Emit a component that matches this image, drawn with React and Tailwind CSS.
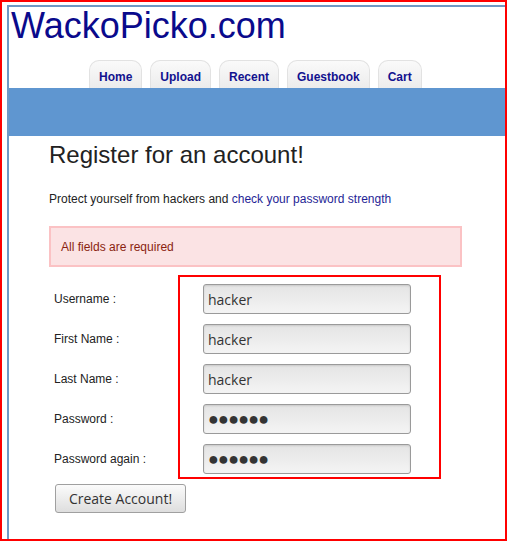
import React from 'react';

const tabs = ['Home', 'Upload', 'Recent', 'Guestbook', 'Cart'];

const fields = [
    { label: 'Username :', value: 'hacker' },
    { label: 'First Name :', value: 'hacker' },
    { label: 'Last Name :', value: 'hacker' },
    { label: 'Password :', value: '●●●●●●', secret: true },
    { label: 'Password again :', value: '●●●●●●', secret: true },
];

const Field = ({ label, value, secret }) => (
    <div className="flex items-center h-[30px]">
        <label className="w-[149px] text-[12px] leading-[14px] text-[#222]">{label}</label>
        <input
            readOnly
            value={value}
            className={`w-[208px] h-[30px] rounded-[3px] border border-[#9a9a9a] bg-gradient-to-b from-[#e4e4e4] to-[#f4f4f4] shadow-[inset_0_1px_2px_rgba(0,0,0,0.12)] px-[4px] text-[#333] outline-none ${secret ? "font-['Liberation_Sans',Arial,sans-serif] text-[18px] tracking-[-0.8px] text-[#2a2a2a]" : "font-['Open_Sans',sans-serif] text-[14px]"}`}
        />
    </div>
);

export default function App() {
    return (
        <div className="relative w-[507px] h-[541px] border-2 border-[#ff0000] overflow-hidden bg-white font-['Liberation_Sans',Arial,sans-serif]">
            <div className="ml-[5px] mt-[3px] w-[620px] h-full border-l-2 border-t-2 border-[#7098c3]">
                {/* Header */}
                <h1 className="pl-[2px] text-[36px] leading-[37px] text-[#0a0a8c]">WackoPicko.com</h1>

                {/* Tabs */}
                <nav className="flex gap-[8px] pl-[80px] mt-[16px]">
                    {tabs.map((t) => (
                        <a
                            key={t}
                            className="px-[9px] pt-[9px] pb-[4px] leading-[14px] text-[12px] font-bold text-[#12128f] rounded-t-[10px] border border-b-0 border-[#e2e2e2] bg-gradient-to-b from-[#fafafa] to-[#ececec]"
                        >
                            {t}
                        </a>
                    ))}
                </nav>
                <div className="h-[48px] bg-[#5f96d0]"></div>

                {/* Content */}
                <div className="pl-[40px]">
                    <h2 className="mt-[5px] text-[24px] leading-[28px] text-[#222]">Register for an account!</h2>
                    <p className="mt-[23px] text-[12px] leading-[14px] text-[#222]">
                        Protect yourself from hackers and <a className="text-[#1f1f96]">check your password strength</a>
                    </p>
                    <div className="mt-[20px] w-[413px] border-2 border-[#fbc2c4] bg-[#fbe3e4] pl-[10px] pt-[12px] pb-[11px] text-[12px] leading-[14px] text-[#8a1f11]">
                        All fields are required
                    </div>

                    {/* Form */}
                    <div className="mt-[17px] pl-[5px] flex flex-col gap-[10px]">
                        {fields.map((f) => (
                            <Field key={f.label} {...f} />
                        ))}
                    </div>
                    <button className="mt-[10px] ml-[6px] w-[131px] h-[29px] rounded-[3px] border border-[#a0a0a0] bg-gradient-to-b from-[#fbfbfb] to-[#dedede] font-['Open_Sans',sans-serif] text-[14px] text-[#333]">
                        Create Account!
                    </button>
                </div>
            </div>

            {/* Annotation around the inputs */}
            <div className="absolute left-[176px] top-[273px] w-[263px] h-[204px] border-2 border-[#ff0000] pointer-events-none"></div>
        </div>
    );
}
